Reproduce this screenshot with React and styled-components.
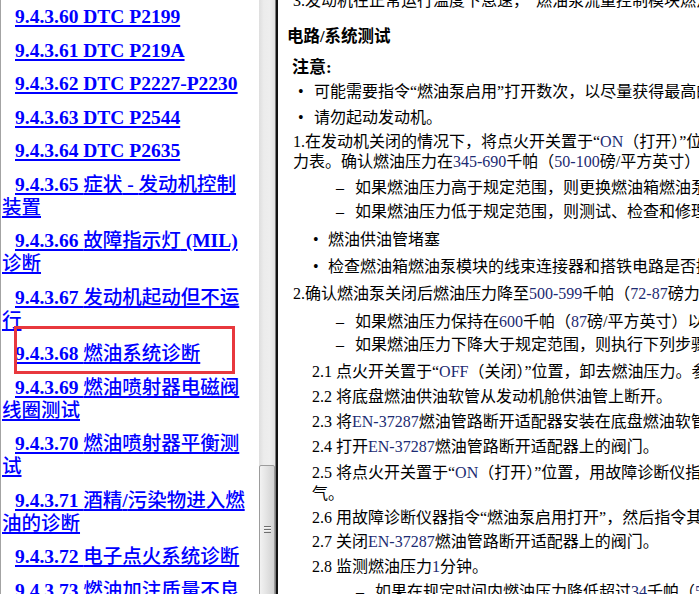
import React from 'react';
import styled, { createGlobalStyle } from 'styled-components';

const GlobalStyle = createGlobalStyle`
  html, body {
    margin: 0;
    padding: 0;
    background: #ffffff;
    overflow: hidden;
  }
`;

// chapter list in the left frame; each entry is already broken into its lines
const TOC = [
  { lines: ['9.4.3.60 DTC P2199'] },
  { lines: ['9.4.3.61 DTC P219A'] },
  { lines: ['9.4.3.62 DTC P2227-P2230'] },
  { lines: ['9.4.3.63 DTC P2544'] },
  { lines: ['9.4.3.64 DTC P2635'] },
  { lines: ['9.4.3.65 症状 - 发动机控制', '装置'] },
  { lines: ['9.4.3.66 故障指示灯 (MIL)', '诊断'] },
  { lines: ['9.4.3.67 发动机起动但不运', '行'] },
  { lines: ['9.4.3.68 燃油系统诊断'], marked: true },
  { lines: ['9.4.3.69 燃油喷射器电磁阀', '线圈测试'] },
  { lines: ['9.4.3.70 燃油喷射器平衡测', '试'] },
  { lines: ['9.4.3.71 酒精/污染物进入燃', '油的诊断'] },
  { lines: ['9.4.3.72 电子点火系统诊断'] },
  { lines: ['9.4.3.73 燃油加注质量不良', '诊断'] },
];

// CJK runs get their own span so they can use the CJK face at a lighter weight
const splitHan = text =>
  text
    .split(/([\u3000-\u303f\u4e00-\u9fff\uff00-\uffef]+)/)
    .map((part, i) => (i % 2 ? <Han key={i}>{part}</Han> : part));

function App() {
  return (
    <>
      <GlobalStyle />
      <Frame>
        <TocPane>
          {TOC.map((item, idx) => (
            <TocItem key={idx} $marked={item.marked}>
              <TocLink href="#">
                {item.lines.map((line, i) => (
                  <React.Fragment key={i}>
                    {i > 0 && <br />}
                    {splitHan(line)}
                  </React.Fragment>
                ))}
              </TocLink>
            </TocItem>
          ))}
        </TocPane>
        <ScrollTrack>
          <ScrollThumb>
            <Grip />
          </ScrollThumb>
        </ScrollTrack>
        <Divider />
        <Doc>
          <Lead>
            3.发动机在正常运行温度下怠速，“燃油泵流量控制模块燃油泵转速”参数应在规定范围内。
          </Lead>
          <SectionTitle>电路/系统测试</SectionTitle>
          <NoteTitle>注意:</NoteTitle>
          <ListRow $gap={4} $indent={20}>
            <Marker $w={16}>•</Marker>
            可能需要指令“燃油泵启用”打开数次，以尽量获得最高的燃油压力。
          </ListRow>
          <ListRow $gap={6} $indent={20}>
            <Marker $w={16}>•</Marker>
            请勿起动发动机。
          </ListRow>
          <Step $gap={4} $indent={15}>
            1.在发动机关闭的情况下，将点火开关置于“<Num>ON</Num>（打开）”位置，用故障诊断仪指令燃油泵启用，观察燃油压
            <br />
            力表。确认燃油压力在<Num>345-690</Num>千帕（<Num>50-100</Num>磅/平方英寸）之间。
          </Step>
          <ListRow $gap={6} $indent={58}>
            <Marker $w={19}>–</Marker>
            如果燃油压力高于规定范围，则更换燃油箱燃油泵模块。
          </ListRow>
          <ListRow $gap={4} $indent={58}>
            <Marker $w={19}>–</Marker>
            如果燃油压力低于规定范围，则测试、检查和修理以下项目：
          </ListRow>
          <ListRow $gap={8} $indent={35}>
            <Marker $w={15}>•</Marker>
            燃油供油管堵塞
          </ListRow>
          <ListRow $gap={7} $indent={35}>
            <Marker $w={15}>•</Marker>
            检查燃油箱燃油泵模块的线束连接器和搭铁电路是否接触不良。
          </ListRow>
          <Step $gap={7} $indent={15}>
            2.确认燃油泵关闭后燃油压力降至<Num>500-599</Num>千帕（<Num>72-87</Num>磅力/平方英寸），并保持<Num>1</Num>分钟。
          </Step>
          <ListRow $gap={8} $indent={58}>
            <Marker $w={19}>–</Marker>
            如果燃油压力保持在<Num>600</Num>千帕（<Num>87</Num>磅/平方英寸）以上，则一切正常。
          </ListRow>
          <ListRow $gap={3} $indent={58}>
            <Marker $w={19}>–</Marker>
            如果燃油压力下降大于规定范围，则执行下列步骤：
          </ListRow>
          <Step $gap={7} $indent={34}>
            2.1 点火开关置于“<Num>OFF</Num>（关闭）”位置，卸去燃油压力。参见“燃油压力释放”。
          </Step>
          <Step $gap={5} $indent={34}>
            2.2 将底盘燃油供油软管从发动机舱供油管上断开。
          </Step>
          <Step $gap={5} $indent={34}>
            2.3 将<Num>EN-37287</Num>燃油管路断开适配器安装在底盘燃油软管和发动机舱供油管之间。
          </Step>
          <Step $gap={5} $indent={34}>
            2.4 打开<Num>EN-37287</Num>燃油管路断开适配器上的阀门。
          </Step>
          <Step $gap={5} $indent={34} $lh={21}>
            2.5 将点火开关置于“<Num>ON</Num>（打开）”位置，用故障诊断仪指令燃油泵启用，排出燃油系统中的空
            <br />
            气。
          </Step>
          <Step $gap={4} $indent={34}>
            2.6 用故障诊断仪器指令“燃油泵启用打开”，然后指令其关闭。
          </Step>
          <Step $gap={4} $indent={34}>
            2.7 关闭<Num>EN-37287</Num>燃油管路断开适配器上的阀门。
          </Step>
          <Step $gap={5} $indent={34}>
            2.8 监测燃油压力<Num>1</Num>分钟。
          </Step>
          <ListRow $gap={5} $indent={78}>
            <Marker $w={19}>–</Marker>
            如果在规定时间内燃油压力降低超过<Num>34</Num>千帕（<Num>5</Num>磅力/平方英寸），则执行下列步骤。
          </ListRow>
        </Doc>
      </Frame>
    </>
  );
}

const Frame = styled.div`
  display: flex;
  width: 699px;
  height: 594px;
  overflow: hidden;
  background: #ffffff;
`;

const TocPane = styled.div`
  flex: none;
  width: 259px;
  box-sizing: border-box;
  border-left: 1px solid #a3a3a3;
  padding: 5px 0 0 1px;
  overflow: hidden;
  font-family: 'Liberation Serif', 'Noto Sans CJK SC', serif;
  font-size: 19.5px;
  font-weight: bold;
  line-height: 23px;
`;

const TocItem = styled.div`
  position: relative;
  white-space: nowrap;
  text-indent: 13px;
  margin-bottom: 10.5px;

  &::after {
    content: '';
    display: ${p => (p.$marked ? 'block' : 'none')};
    position: absolute;
    top: -16px;
    bottom: -9px;
    left: 12px;
    width: 221px;
    box-sizing: border-box;
    border: 3px solid #e8383d;
    pointer-events: none;
  }
`;

const TocLink = styled.a`
  color: #0000ff;
  text-decoration: underline;
  text-decoration-thickness: 1.5px;
  text-underline-offset: 2px;
`;

const Han = styled.span`
  font-family: 'Noto Sans CJK SC', sans-serif;
  font-weight: 500;
  line-height: 0;
`;

const ScrollTrack = styled.div`
  flex: none;
  width: 16px;
  display: flex;
  flex-direction: column;
  background: linear-gradient(to right, #dedede, #ececec 30%, #eeeeee 70%, #e2e2e2);
  overflow: hidden;
`;

const ScrollThumb = styled.div`
  flex: none;
  margin-top: 465px;
  height: 132px;
  box-sizing: border-box;
  border: 1px solid #9c9c9c;
  border-radius: 2px;
  background: linear-gradient(to right, #f2f2f2, #e4e4e4 45%, #d2d2d2);
  display: flex;
  align-items: center;
  justify-content: center;
`;

const Grip = styled.div`
  width: 7px;
  height: 7px;
  background: repeating-linear-gradient(
    to bottom,
    #6e6e6e 0,
    #6e6e6e 1px,
    #f4f4f4 1px,
    #f4f4f4 2px,
    transparent 2px,
    transparent 3px
  );
  margin-top: -4px;
`;

const Divider = styled.div`
  flex: none;
  width: 3px;
  background: linear-gradient(to right, #7c7c7c 1px, #121212 1px);
`;

const Doc = styled.div`
  flex: 1;
  min-width: 0;
  overflow: hidden;
  font-family: 'Liberation Serif', 'Noto Sans CJK SC', serif;
  font-size: 16px;
  line-height: 20px;
  color: #000000;
`;

const Lead = styled.div`
  white-space: nowrap;
  margin-top: -9px;
  padding-left: 15px;
`;

const SectionTitle = styled.div`
  white-space: nowrap;
  margin-top: 16px;
  padding-left: 9px;
  font-size: 16.5px;
  font-weight: bold;
`;

const NoteTitle = styled.div`
  white-space: nowrap;
  margin-top: 11px;
  padding-left: 14px;
  font-size: 17px;
  font-weight: bold;
`;

const ListRow = styled.div`
  display: flex;
  white-space: nowrap;
  margin-top: ${p => p.$gap}px;
  padding-left: ${p => p.$indent}px;
`;

const Marker = styled.span`
  flex: none;
  width: ${p => p.$w}px;
`;

const Step = styled.div`
  white-space: nowrap;
  margin-top: ${p => p.$gap}px;
  padding-left: ${p => p.$indent}px;
  line-height: ${p => p.$lh || 20}px;
`;

const Num = styled.span`
  color: #1c2a72;
`;

export default App;
